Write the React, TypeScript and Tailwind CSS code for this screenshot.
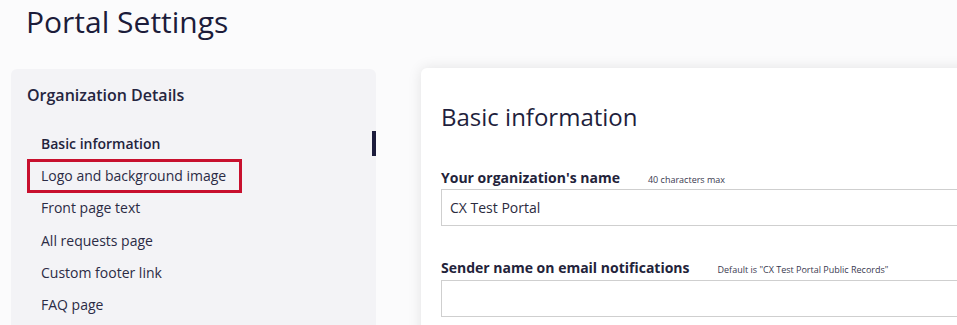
import React from 'react';

const navItems = [
  'Basic information',
  'Logo and background image',
  'Front page text',
  'All requests page',
  'Custom footer link',
  'FAQ page',
];

export default function App() {
  const activeIndex = 0;
  const highlightIndex = 1;

  return (
    <div
      className="h-[325px] w-full overflow-hidden bg-[#fbfbfc] text-[#1f1f3d]"
      style={{ fontFamily: '"Open Sans", "Noto Sans", sans-serif' }}
    >
      {/* Header */}
      <h1 className="pl-[26px] pt-[4px] text-[30px] leading-[36px] font-normal text-[#1c1c3a]">
        Portal Settings
      </h1>

      <div className="mt-[29px] flex items-start">
        {/* Sidebar */}
        <aside className="ml-[11px] h-[300px] w-[365px] shrink-0 rounded-md bg-[#f3f3f6] pt-[14px]">
          <h2 className="pl-[16px] text-[16px] leading-[24px] font-semibold text-[#25253f]">
            Organization Details
          </h2>
          <ul className="mt-[21px]">
            {navItems.map((item, i) => (
              <li key={item} className="relative flex h-[32.2px] items-center pl-[19px]">
                <span
                  className={`inline-block py-[4px] pl-[11px] pr-[13px] text-[14px] leading-[20px] ${
                    i === activeIndex ? 'font-semibold text-[#23233d]' : 'text-[#2b2b45]'
                  } ${i === highlightIndex ? 'outline-[3px] outline-solid outline-[#c8102e]' : ''}`}
                >
                  {item}
                </span>
                {i === activeIndex && (
                  <span className="absolute right-0 top-[3px] h-[25px] w-[4px] bg-[#1c1c3c]" />
                )}
              </li>
            ))}
          </ul>
        </aside>

        {/* Main card */}
        <main className="-mt-px ml-[45px] h-[300px] w-[620px] shrink-0 rounded-md bg-white pl-[20px] pt-[32px] shadow-[0_0_14px_rgba(0,0,0,0.10)]">
          <h3 className="text-[24px] leading-[33px] font-normal text-[#1f1f3d]">Basic information</h3>

          <div className="mt-[35px]">
            <div className="flex items-baseline">
              <label className="text-[14px] leading-[20px] font-bold text-[#23233a]">
                Your organization's name
              </label>
              <span className="ml-[28px] text-[9px] text-[#3a3a50]">40 characters max</span>
            </div>
            <input
              readOnly
              value="CX Test Portal"
              className="mt-px block h-[37px] w-full border border-[#cfcfcf] bg-white pl-[8px] text-[14px] text-[#2b2b40] outline-none"
            />
          </div>

          <div className="mt-[32px]">
            <div className="flex items-baseline">
              <label className="text-[14px] leading-[20px] font-bold text-[#23233a]">
                Sender name on email notifications
              </label>
              <span className="ml-[28px] text-[9px] text-[#3a3a50]">
                Default is "CX Test Portal Public Records"
              </span>
            </div>
            <input
              readOnly
              value=""
              className="mt-[2px] block h-[37px] w-full border border-[#cfcfcf] bg-white pl-[8px] text-[14px] outline-none"
            />
          </div>
        </main>
      </div>
    </div>
  );
}
